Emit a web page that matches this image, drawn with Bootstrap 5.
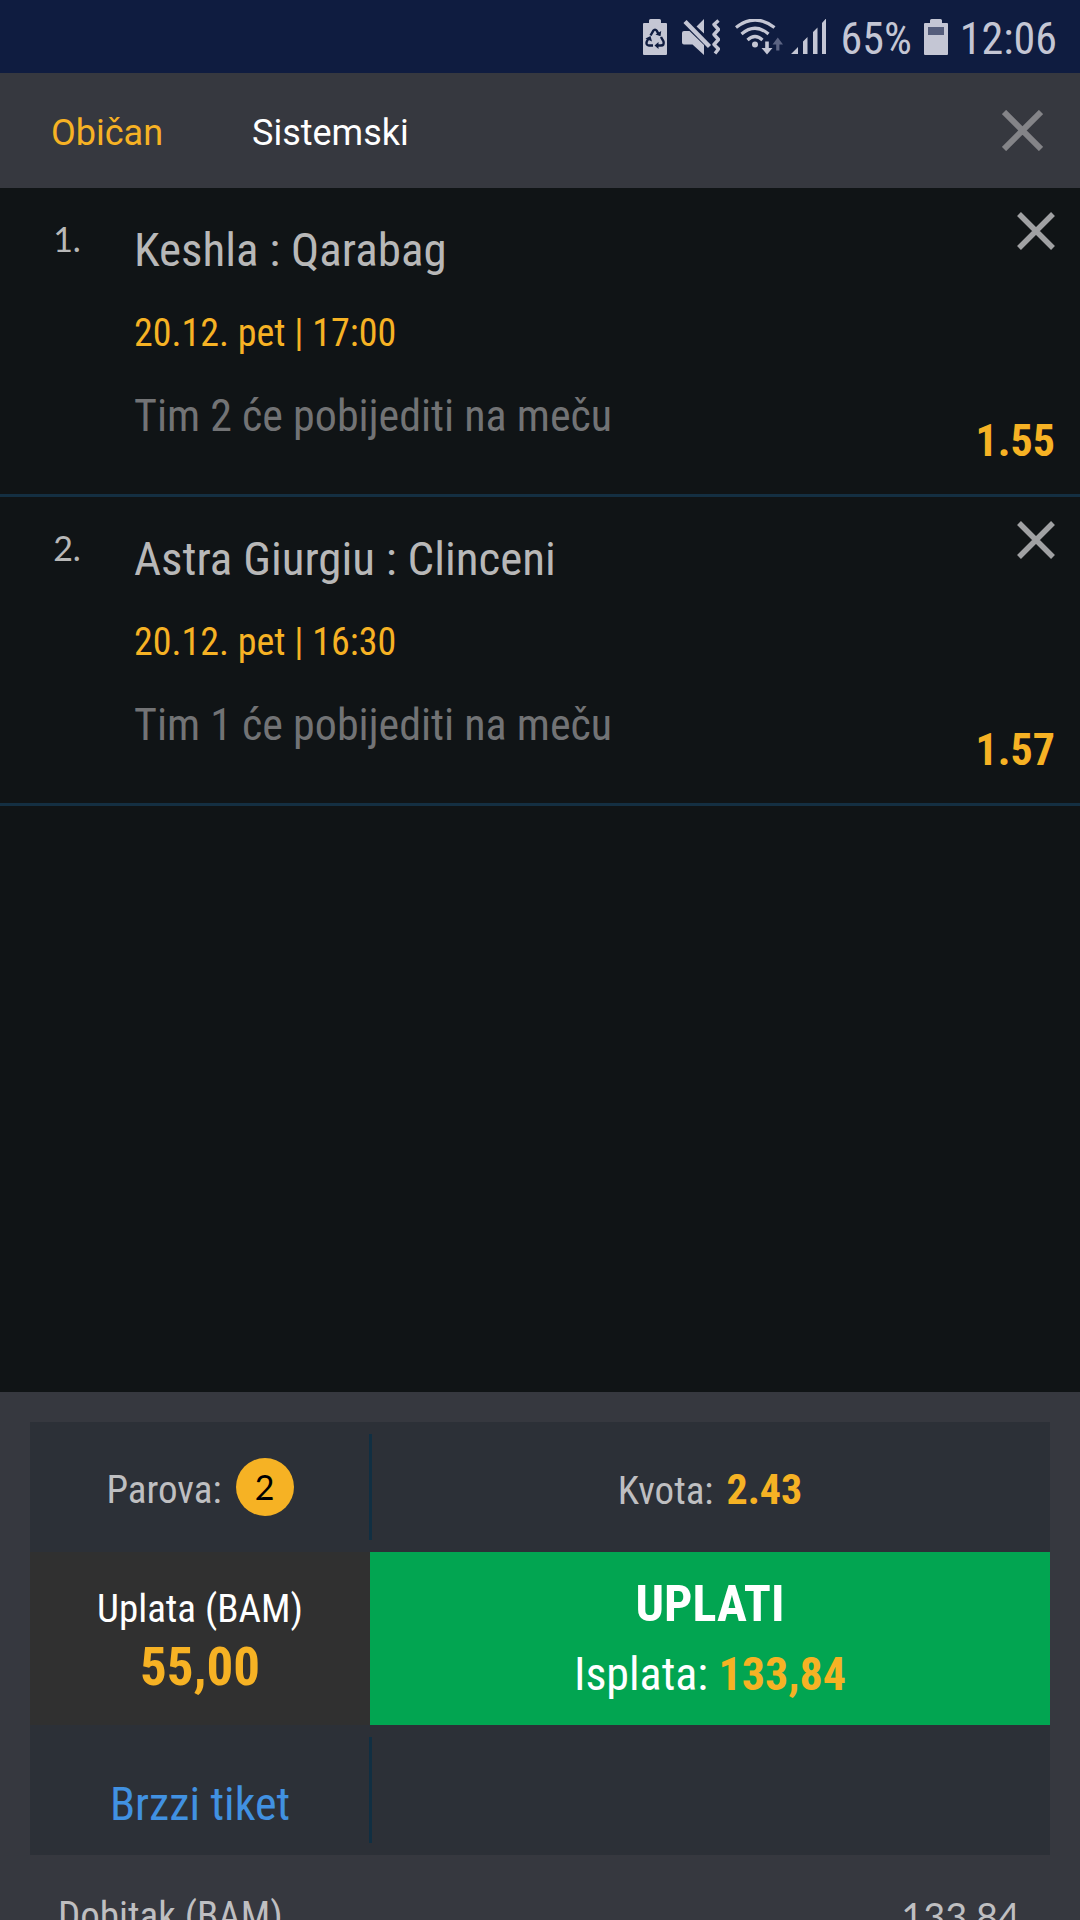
<!DOCTYPE html>
<html lang="bs">
<head>
<meta charset="utf-8">
<meta name="viewport" content="width=device-width, initial-scale=1">
<title>Tiket</title>
<link href="https://cdn.jsdelivr.net/npm/bootstrap@5.3.0/dist/css/bootstrap.min.css" rel="stylesheet">
<style>
  :root { --gold: #f6b224; --line: #142f42; --bar: #36383f; --box: #2c3037; }
  body { background: #101416; color: #bfbfc1; font-family: "Roboto Condensed", Roboto, sans-serif; line-height: 56px; }
  .gold { color: var(--gold); }
  .fs-38 { font-size: 38px; }
  .fs-39 { font-size: 39px; }
  .fs-42 { font-size: 42px; }
  .fs-44 { font-size: 44px; }
  .fs-46 { font-size: 46px; }
  .fs-50 { font-size: 50px; }

  .status-bar { background: #0f1c40; color: #c4c6d4; height: 73px; padding-right: 23px; }
  .status-bar svg { fill: currentColor; }
  .status-text { padding-top: 4px; }
  .ic-gap { margin-right: 15px; }

  .tab-bar { background: var(--bar); height: 115px; padding: 0 37px 0 51px; font-family: Roboto, sans-serif; }
  .tab-bar .nav { gap: 89px; }
  .tab-bar .nav-link { padding: 4px 0 0; color: #fff; font-size: 36px; }
  .tab-bar .nav-link.active { color: var(--gold); }
  .x-btn { border: 0; background: none; padding: 0; line-height: 0; color: #a0a1a3; }
  .x-btn.dim { color: #848488; }
  .x-btn svg { stroke: currentColor; fill: none; }

  .bet { border-bottom: 3px solid var(--line); }
  .bet-no { width: 134px; padding-top: 34px; font: 34px/34px Lato, sans-serif; text-align: center; color: #b8b8b8; }
  .bet-main { padding: 34px 0 50px; gap: 25px; }
  .bet-name { font-size: 47px; line-height: 56px; color: #b8b8b8; margin: 0; font-weight: 400; }
  .bet-time { line-height: 60px; }
  .bet-pick { color: #727375; }
  .bet-side { padding: 24px 25px 25px 0; }

  .sheet { flex: 0 0 528px; background: var(--bar); padding: 30px 30px 0; overflow-y: auto; scrollbar-width: none; }
  .sheet::-webkit-scrollbar { display: none; }
  .slip { background: var(--box); }
  .slip-row { height: 130px; }
  .rule { position: relative; }
  .rule::before { content: ""; position: absolute; left: -1px; top: 12px; bottom: 12px; width: 3px; background: #112f42; }
  .slip-text { padding-top: 6px; }
  .count { width: 58px; height: 58px; margin-left: 14px; background: var(--gold); color: #000; font: 34px/58px Lato, sans-serif; }
  .stake { background: #303030; color: #fff; height: 173px; }
  .stake input { width: 100%; height: 60px; padding: 0; border: 0; background: none; text-align: center; font-size: 53px; font-weight: 700; line-height: 60px; color: var(--gold); outline: 0; }
  .pay { background: #02a551; border: 0; color: #fff; height: 173px; line-height: 70px; }
  .pay:hover { background: #02a551; color: #fff; }
  .quick { padding-top: 28px; font-size: 46px; color: #4191e1; }
  .totals { padding: 33px 30px 30px 28px; }
  .win { font: 38px/56px Lato, sans-serif; }
</style>
<script src="https://cdn.jsdelivr.net/npm/bootstrap@5.3.0/dist/js/bootstrap.bundle.min.js"></script>
</head>
<body class="vh-100 overflow-hidden d-flex flex-column">

<div class="status-bar d-flex align-items-center justify-content-end flex-shrink-0">
  <svg class="ic-gap" width="24" height="36" viewBox="0 0 24 36" aria-hidden="true">
    <path d="M1 4H6V1.500Q6 0 7.500 0H16.500Q18 0 18 1.500V4H23Q24 4 24 5V35Q24 36 23 36H1Q0 36 0 35V5Q0 4 1 4Z"/>
    <g fill="none" stroke="#0f1c40" stroke-width="2.400"><path d="M7.500 16.500L10.200 11.800Q12 9.500 13.800 11.800L15.500 14.800M18 18L20.500 22.500Q21.500 26.500 18 26.500H14M10 26.500H6Q2.500 26 3.800 22.500L5.500 19.500"/></g>
    <path fill="#0f1c40" d="M12.500 15.500L17.500 17.200L18.200 12ZM15.500 23V30L11.500 26.500ZM2.500 19.500L7.500 17L9 22.500Z"/>
  </svg>
  <svg class="ic-gap" width="38" height="36" viewBox="0 0 38 36" aria-hidden="true">
    <path d="M0 14Q0 12 2 12H7.500L22 26V36L10.500 25.500H2Q0 25.500 0 23.500ZM22 0V14.500L14.500 7.500Z"/>
    <path d="M3 2.500L27.500 27.500" fill="none" stroke="currentColor" stroke-width="4.400"/>
    <path d="M36.500 1.500L32 5.500L36.500 10.500L32 15.500L36.500 20.500L32 25.500L36.500 30L33 34.500" fill="none" stroke="currentColor" stroke-width="3.400" stroke-linejoin="round"/>
  </svg>
  <svg width="48" height="36" viewBox="0 0 48 36" aria-hidden="true">
    <g fill="none" stroke="currentColor" stroke-width="3.200"><path d="M1 8.500Q20 -6.500 39.500 8.500M6.500 15Q20 3.500 33.500 15M12.500 21Q20 14 27.500 21"/></g>
    <circle cx="20" cy="25.500" r="3"/>
    <path d="M30.200 22.500H33.800V29H37.500L32 35.500L26.500 29H30.200Z"/>
    <path fill="#5c6483" d="M41.200 31.500H44.400V25.500H48L42.800 18.500L37.500 25.500H41.200Z"/>
  </svg>
  <svg class="ic-gap ms-2" width="35" height="36" viewBox="0 0 35 36" aria-hidden="true">
    <path d="M0 35L7 28V35ZM12 35V22.500L16.500 18V35ZM22 35V13L26.500 8.500V35ZM31 35V4L35 -.5V35Z"/>
  </svg>
  <span class="status-text fs-44 me-2">65%</span>
  <svg class="ms-1 me-2" width="24" height="36" viewBox="0 0 24 36" aria-hidden="true">
    <path d="M1 4H6V1.500Q6 0 7.500 0H16.500Q18 0 18 1.500V4H23Q24 4 24 5V35Q24 36 23 36H1Q0 36 0 35V5Q0 4 1 4Z"/>
    <path fill="#555d7b" d="M4 8H20V16H4Z"/>
  </svg>
  <span class="status-text fs-44 ms-1">12:06</span>
</div>

<header class="tab-bar d-flex align-items-center justify-content-between flex-shrink-0">
  <nav class="nav">
    <a class="nav-link active" href="#obican">Običan</a>
    <a class="nav-link" href="#sistemski">Sistemski</a>
  </nav>
  <button class="x-btn dim" type="button" aria-label="Zatvori">
    <svg width="41" height="41" viewBox="0 0 41 41"><path d="M2 2L39 39M39 2L2 39" stroke-width="6"/></svg>
  </button>
</header>

<main class="flex-grow-1 overflow-hidden">
  <article class="bet d-flex">
    <div class="bet-no flex-shrink-0">1.</div>
    <div class="bet-main d-flex flex-column flex-grow-1">
      <h2 class="bet-name">Keshla : Qarabag</h2>
      <div class="bet-time gold fs-38">20.12. pet | 17:00</div>
      <div class="bet-pick fs-44">Tim 2 će pobijediti na meču</div>
    </div>
    <div class="bet-side d-flex flex-column justify-content-between align-items-end">
      <button class="x-btn" type="button" aria-label="Ukloni par 1">
        <svg width="38" height="38" viewBox="0 0 38 38"><path d="M2 2L36 36M36 2L2 36" stroke-width="5.500"/></svg>
      </button>
      <span class="gold fw-bold fs-44">1.55</span>
    </div>
  </article>
  <article class="bet d-flex">
    <div class="bet-no flex-shrink-0">2.</div>
    <div class="bet-main d-flex flex-column flex-grow-1">
      <h2 class="bet-name">Astra Giurgiu : Clinceni</h2>
      <div class="bet-time gold fs-38">20.12. pet | 16:30</div>
      <div class="bet-pick fs-44">Tim 1 će pobijediti na meču</div>
    </div>
    <div class="bet-side d-flex flex-column justify-content-between align-items-end">
      <button class="x-btn" type="button" aria-label="Ukloni par 2">
        <svg width="38" height="38" viewBox="0 0 38 38"><path d="M2 2L36 36M36 2L2 36" stroke-width="5.500"/></svg>
      </button>
      <span class="gold fw-bold fs-44">1.57</span>
    </div>
  </article>
</main>

<section class="sheet">
  <div class="slip">
    <div class="row g-0 slip-row">
      <div class="col-4 d-flex align-items-center justify-content-center">
        <span class="slip-text fs-39">Parova:</span>
        <span class="count rounded-circle text-center">2</span>
      </div>
      <div class="col-8 rule d-flex align-items-center justify-content-center">
        <span class="slip-text fs-39">Kvota: <strong class="gold fs-42 ms-1">2.43</strong></span>
      </div>
    </div>
    <div class="row g-0">
      <div class="col-4 stake d-flex flex-column justify-content-center text-center">
        <label class="fs-39" for="stake">Uplata (BAM)</label>
        <input id="stake" type="text" inputmode="decimal" value="55,00">
      </div>
      <div class="col-8">
        <button class="btn pay rounded-0 w-100 p-0" type="button">
          <span class="d-block fs-50 fw-bold">UPLATI</span>
          <span class="d-block fs-46">Isplata: <strong class="gold">133,84</strong></span>
        </button>
      </div>
    </div>
    <div class="row g-0 slip-row">
      <div class="col-4 d-flex align-items-center justify-content-center">
        <a class="quick text-decoration-none" href="#brzzi">Brzzi tiket</a>
      </div>
      <div class="col-8 rule"></div>
    </div>
  </div>
  <div class="totals d-flex justify-content-between">
    <span class="fs-39">Dobitak (BAM)</span>
    <span class="win">133,84</span>
  </div>
</section>

</body>
</html>
